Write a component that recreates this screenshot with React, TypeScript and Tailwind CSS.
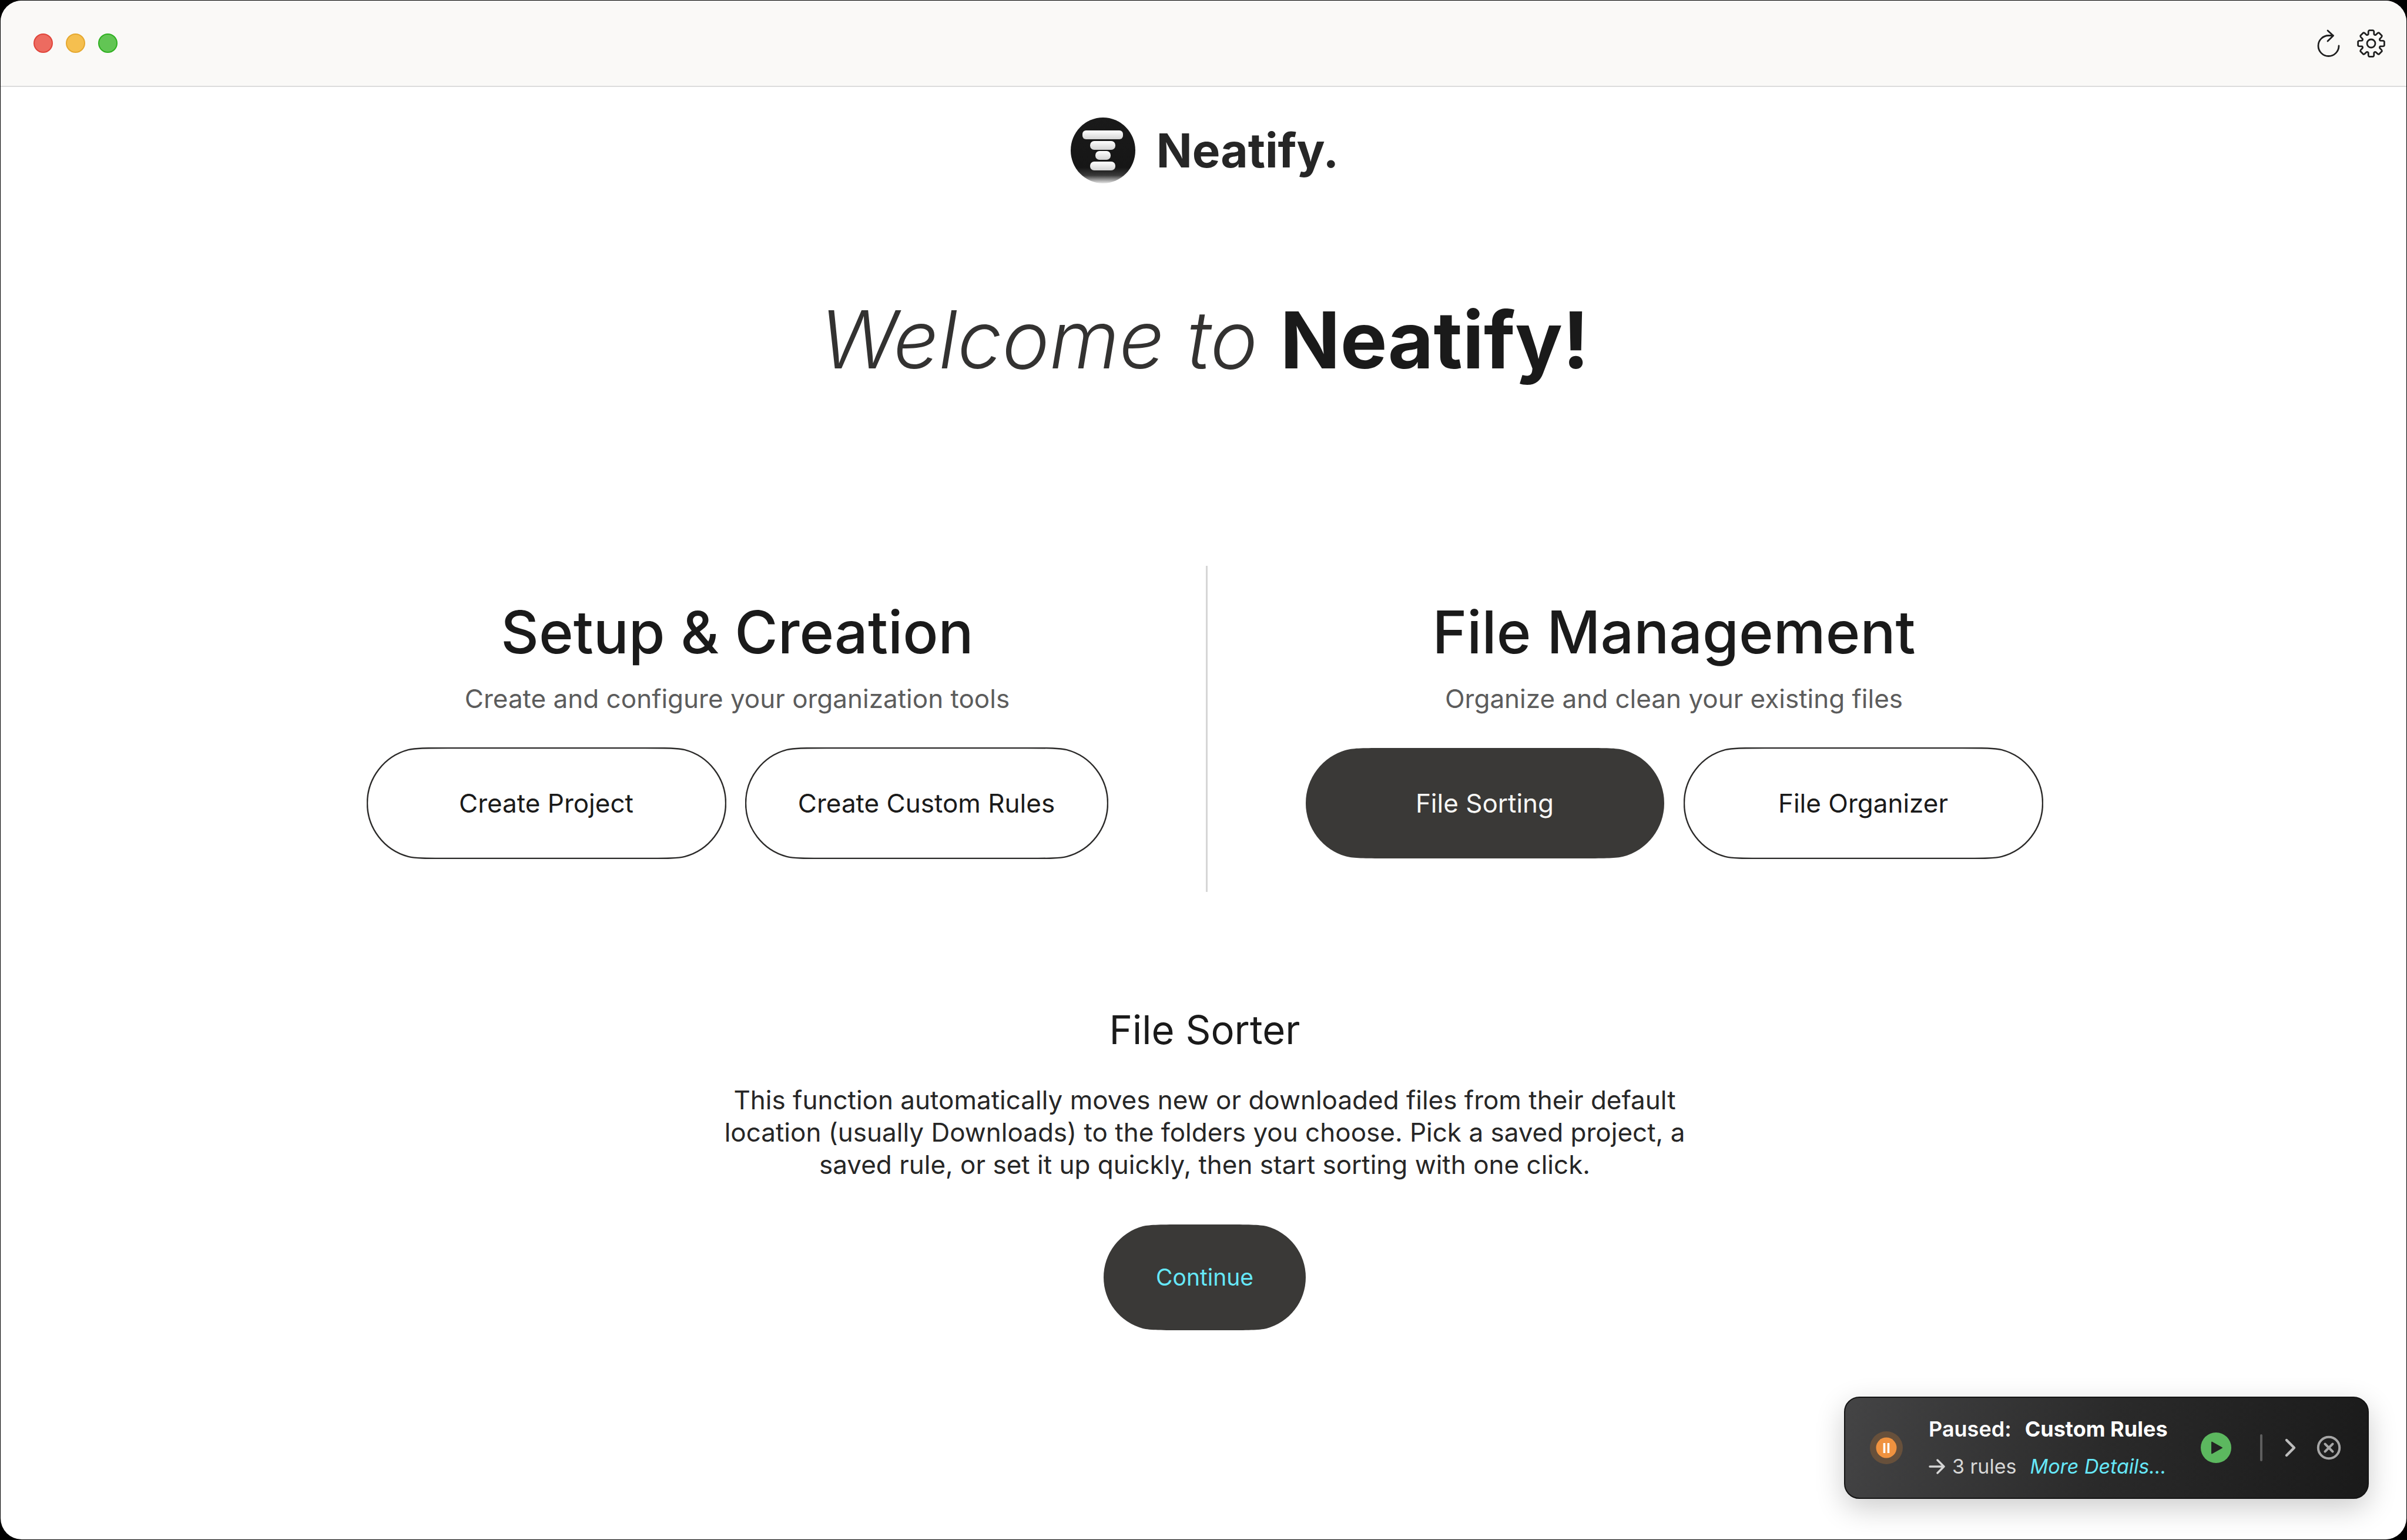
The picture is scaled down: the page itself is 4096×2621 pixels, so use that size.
import React from "react";

// Rounded pill whose end caps ease gradually into the straight edges.
const pillPath = (w: number, h: number, inset: number) => {
  const m = h / 2;
  const r = m - inset;
  const dx = r * Math.sin(Math.PI / 12);
  const dy = r * Math.cos(Math.PI / 12);
  const left = m - dx;
  const right = w - m + dx;
  const top = m - dy;
  const bottom = m + dy;
  const t = inset;
  const b = h - inset;
  const flat = 138;
  return [
    `M${flat} ${t}H${w - flat}`,
    `C${w - 100} ${t} ${right - 12} ${t + 0.2} ${right} ${top}`,
    `A${r} ${r} 0 0 1 ${right} ${bottom}`,
    `C${right - 12} ${b - 0.2} ${w - 100} ${b} ${w - flat} ${b}`,
    `H${flat}`,
    `C100 ${b} ${left + 12} ${b - 0.2} ${left} ${bottom}`,
    `A${r} ${r} 0 0 1 ${left} ${top}`,
    `C${left + 12} ${t + 0.2} 100 ${t} ${flat} ${t}Z`,
  ].join("");
};

function PillButton({
  label,
  width,
  active = false,
}: {
  label: string;
  width: number;
  active?: boolean;
}) {
  return (
    <button
      type="button"
      aria-pressed={active}
      className={`relative flex h-[190px] items-center justify-center ${active ? "text-[#f7f7f5]" : "text-[#1a1a1a]"}`}
      style={{ width }}
    >
      <svg className="absolute inset-0 size-full" viewBox={`0 0 ${width} 190`} aria-hidden="true">
        <path
          d={pillPath(width, 190, 1)}
          fill={active ? "#3a3937" : "#ffffff"}
          stroke={active ? "none" : "#2b2a29"}
          strokeWidth="2.400"
        />
      </svg>
      <span className="relative text-[44px] leading-[56px]">{label}</span>
    </button>
  );
}

function Logo() {
  return (
    <svg className="h-[112px] w-[110px]" viewBox="0 0 110 112" aria-hidden="true">
      <defs>
        <linearGradient id="disc" x1="0" y1="0" x2="0" y2="1">
          <stop offset="0" stopColor="#1a1a1a" />
          <stop offset="0.76" stopColor="#161616" />
          <stop offset="0.88" stopColor="#3a3a3a" />
          <stop offset="1" stopColor="#e6e6e6" />
        </linearGradient>
        <linearGradient id="bar" x1="0" y1="0" x2="0" y2="1">
          <stop offset="0" stopColor="#ffffff" />
          <stop offset="1" stopColor="#d4d4d4" />
        </linearGradient>
      </defs>
      <ellipse cx="55" cy="56" rx="55" ry="56" fill="url(#disc)" />
      <rect x="20" y="22" width="69" height="15" rx="6" fill="url(#bar)" />
      <rect x="33" y="40" width="43" height="15" rx="7" fill="url(#bar)" />
      <rect x="42" y="57" width="26" height="15" rx="7" fill="url(#bar)" />
      <rect x="33" y="75" width="43" height="15" rx="7" fill="url(#bar)" />
    </svg>
  );
}

function Section({
  title,
  text,
  children,
}: {
  title: string;
  text: string;
  children: React.ReactNode;
}) {
  return (
    <section className="flex flex-col items-center pt-[59px]">
      <h2 className="text-[100px] leading-[108px] font-medium text-[#1a1a1a]">{title}</h2>
      <p className="mt-[31px] text-[44px] leading-[56px] text-[#5c5c5c]">{text}</p>
      <div className="mt-[55px] flex gap-8">{children}</div>
    </section>
  );
}

const gear = () => {
  const pts: string[] = [];
  for (let i = 0; i < 8; i++) {
    const p = (r: number, deg: number) => {
      const t = ((i * 45 + deg - 90) * Math.PI) / 180;
      return `${(24 + r * Math.cos(t)).toFixed(2)} ${(24 + r * Math.sin(t)).toFixed(2)}`;
    };
    pts.push(
      `${i === 0 ? "M" : "L"}${p(16.5, -17)}L${p(21, -13)}Q${p(22.6, -11)} ${p(22.6, -8)}L${p(22.6, 8)}Q${p(22.6, 11)} ${p(21, 13)}L${p(16.5, 17)}Q${p(15.2, 22.5)} ${p(16.5, 28)}`,
    );
  }
  return pts.join("") + "Z";
};

export default function App() {
  return (
    <div className="min-h-screen bg-black p-px font-['Inter',sans-serif]">
      <div className="relative flex min-h-[calc(100vh-2px)] flex-col overflow-hidden rounded-[36px] bg-white">
        <header className="flex h-[147px] items-center justify-between border-b-2 border-[#dcdcdc] bg-[#faf9f7] pr-9 pl-14">
          <div className="flex gap-[22px]">
            <button type="button" aria-label="Close" className="size-[33px] rounded-full border-2 border-[#e0443a] bg-[#ed6b60]" />
            <button type="button" aria-label="Minimize" className="size-[33px] rounded-full border-2 border-[#e5a82f] bg-[#f5bf4f]" />
            <button type="button" aria-label="Zoom" className="size-[33px] rounded-full border-2 border-[#2fb021] bg-[#62c554]" />
          </div>
          <div className="flex gap-[25px] text-[#1f1f1f]">
            <button type="button" aria-label="Refresh" className="size-12">
              <svg viewBox="0 0 48 48" fill="none" stroke="currentColor" strokeWidth="2.800" strokeLinecap="round" strokeLinejoin="round">
                <path d="M42 28A17.5 17.5 0 1 1 24.500 10.500H32.500M23 2L32.500 10.800L23 20" />
              </svg>
            </button>
            <button type="button" aria-label="Settings" className="size-12">
              <svg viewBox="0 0 48 48" fill="none" stroke="currentColor" strokeWidth="2.800" strokeLinejoin="round">
                <path d={gear()} />
                <circle cx="24" cy="24" r="7" />
              </svg>
            </button>
          </div>
        </header>

        <main className="flex flex-col items-center pl-1">
          <div className="mt-[52px] flex items-center gap-[36px]">
            <Logo />
            <span className="text-[80px] leading-[100px] font-bold text-[#262626]">Neatify.</span>
          </div>

          <h1 className="mt-[178px] text-[136px] leading-[176px] font-light text-[#333231] italic">
            Welcome to <strong className="text-[134px] font-bold text-[#1a1a1a] not-italic">Neatify!</strong>
          </h1>

          <div className="mt-[297px] flex h-[555px] gap-[166px]">
            <Section title="Setup & Creation" text="Create and configure your organization tools">
              <PillButton label="Create Project" width={612} />
              <PillButton label="Create Custom Rules" width={618} />
            </Section>
            <div className="w-[3px] bg-[#d6d6d6]" />
            <Section title="File Management" text="Organize and clean your existing files">
              <PillButton label="File Sorting" width={612} active />
              <PillButton label="File Organizer" width={612} />
            </Section>
          </div>

          <h3 className="mt-[197px] text-[67px] leading-[76px] text-[#1a1a1a]">File Sorter</h3>
          <p className="mt-[54px] w-[1680px] text-center text-[44px] leading-[55px] text-[#262626]">
            This function automatically moves new or downloaded files from their default location
            (usually Downloads) to the folders you choose. Pick a saved project, a saved rule, or set it
            up quickly, then start sorting with one click.
          </p>
          <button type="button" className="relative mt-[74px] flex h-[180px] w-[344px] items-center justify-center">
            <svg className="absolute inset-0 size-full" viewBox="0 0 344 180" aria-hidden="true">
              <path d={pillPath(344, 180, 0)} fill="#3a3937" />
            </svg>
            <span className="relative text-[39px] leading-[48px] text-[#66e8f9]">Continue</span>
          </button>
        </main>

        <aside className="absolute right-16 bottom-[69px] flex h-[174px] w-[893px] items-center rounded-[26px] border-2 border-[#141414] bg-linear-[105deg] from-[#444445] via-[#2a2a2a] to-[#1a1a1a] pl-[42px] text-white shadow-[0_16px_50px_rgba(0,0,0,0.2)]">
          <svg className="size-14 shrink-0" viewBox="0 0 56 56" role="img" aria-label="Paused">
            <circle cx="28" cy="28" r="28" fill="#67503b" />
            <circle cx="28" cy="28" r="17.500" fill="#f0923f" />
            <path d="M24.500 20V37M31.500 20V37" stroke="#fff" strokeWidth="3.600" />
          </svg>
          <div className="ml-[44px] flex w-[463px] flex-col gap-[18px] whitespace-nowrap">
            <div className="flex gap-[23px] text-[36px] leading-[46px]">
              <span className="font-semibold">Paused:</span>
              <span className="font-bold">Custom Rules</span>
            </div>
            <div className="flex gap-[23px] text-[34px] leading-[46px]">
              <span className="flex items-center gap-3 text-[#d6d6d6]">
                <svg className="size-[28px]" viewBox="0 0 28 28" fill="none" stroke="currentColor" strokeWidth="3.400" strokeLinecap="round" strokeLinejoin="round" aria-hidden="true">
                  <path d="M2 14H26M15 3L26 14L15 25" />
                </svg>
                3 rules
              </span>
              <a href="#details" className="text-[#66e8f9] italic">More Details...</a>
            </div>
          </div>
          <button type="button" aria-label="Resume" className="size-[52px] shrink-0">
            <svg viewBox="0 0 52 52">
              <circle cx="26" cy="26" r="26" fill="#5cb85f" />
              <path d="M19 16.500V35.500L36 26Z" fill="#232323" stroke="#232323" strokeWidth="2" strokeLinejoin="round" />
            </svg>
          </button>
          <div className="ml-[49px] h-[46px] w-[4px] rounded-full bg-[#5e5e5e]" />
          <button type="button" aria-label="Expand" className="ml-[30px] size-9">
            <svg viewBox="0 0 36 36" fill="none" stroke="#bdbdbd" strokeWidth="4.400" strokeLinecap="round" strokeLinejoin="round">
              <path d="M11 5L24 18L11 31" />
            </svg>
          </button>
          <button type="button" aria-label="Dismiss" className="ml-[26px] size-[42px]">
            <svg viewBox="0 0 42 42" fill="none" stroke="#a6a6a6" strokeWidth="4" strokeLinecap="round">
              <circle cx="21" cy="21" r="18.200" />
              <path d="M14.500 14.500L27.500 27.500M27.500 14.500L14.500 27.500" />
            </svg>
          </button>
        </aside>
      </div>
    </div>
  );
}
